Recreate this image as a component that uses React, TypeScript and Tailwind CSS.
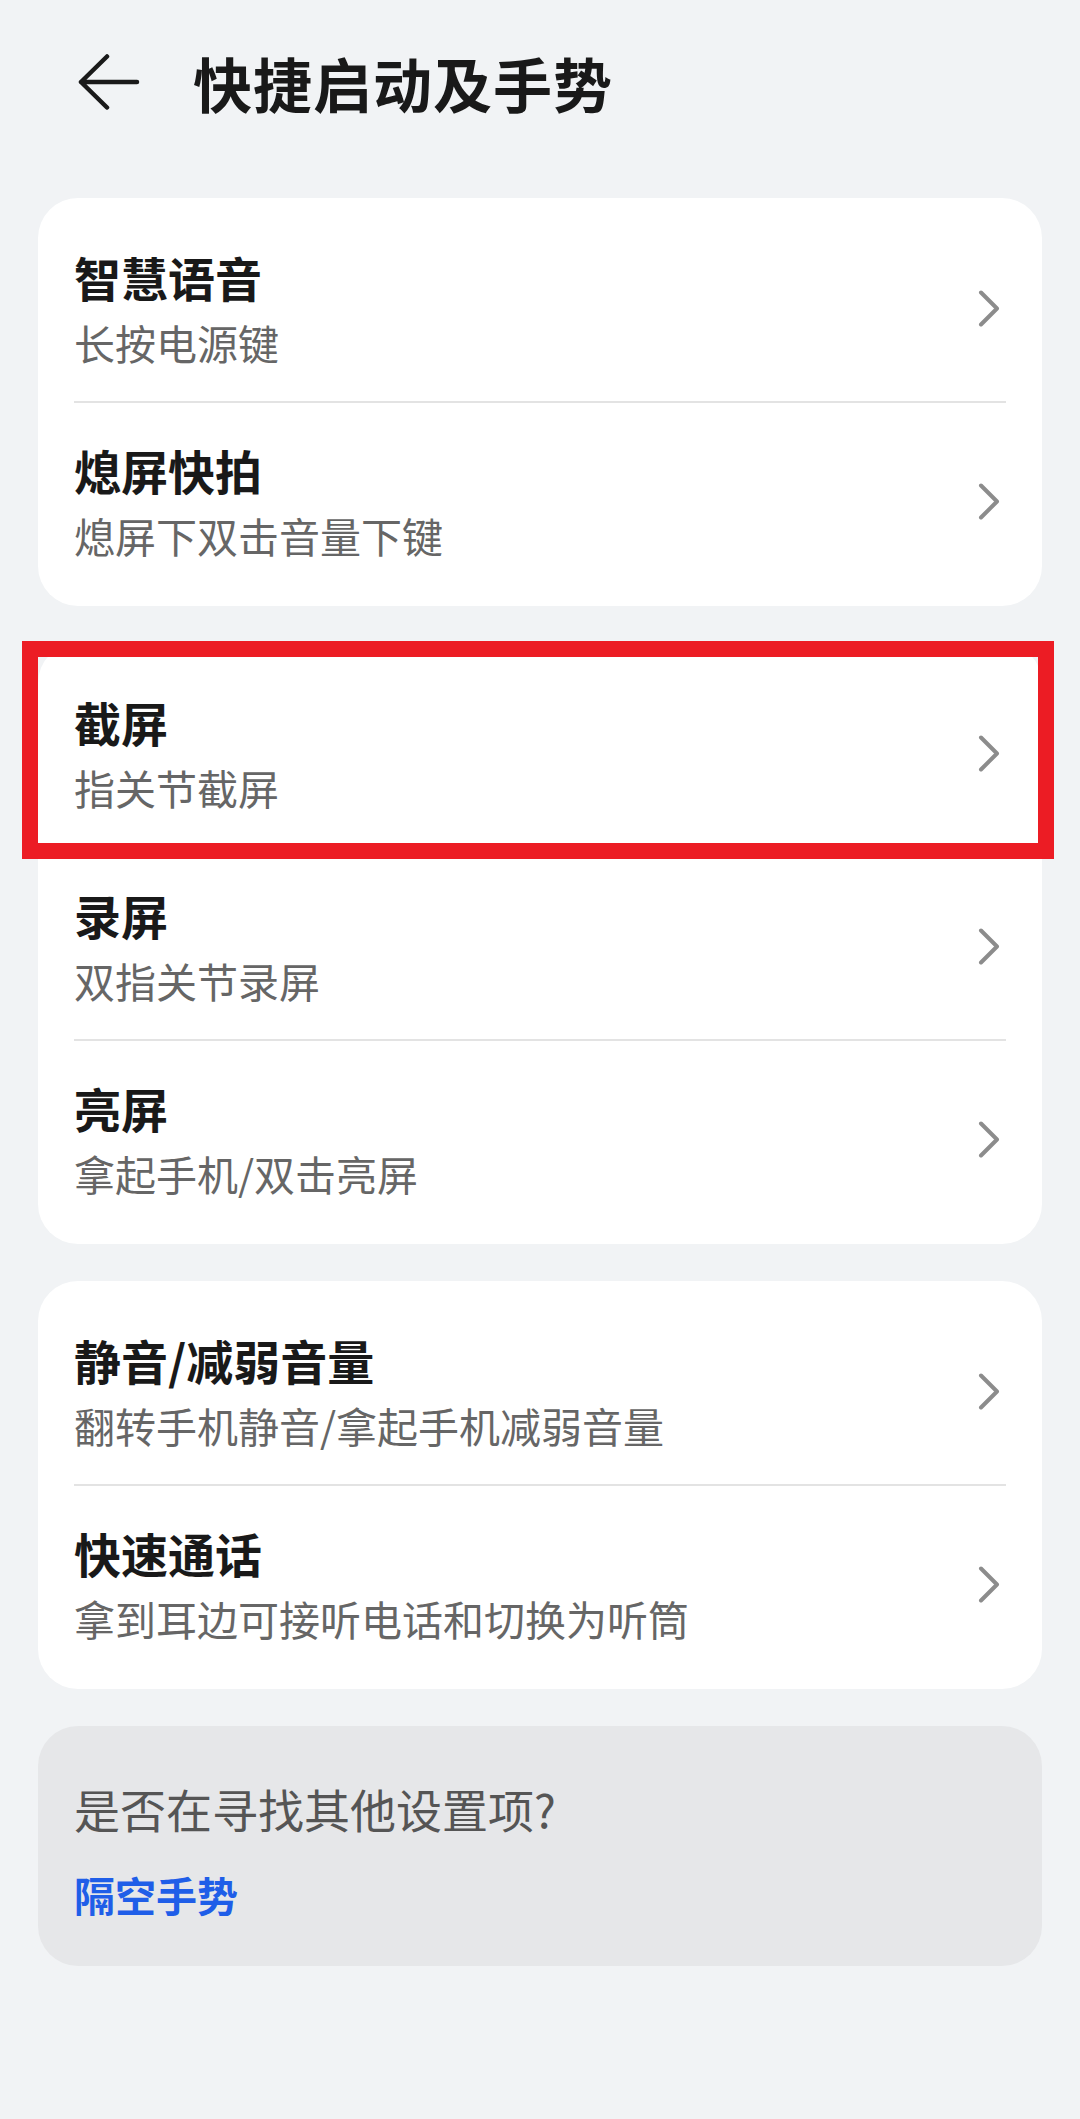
import React from 'react';

type Item = { title: string; desc: string };

const groups: Item[][] = [
  [
    { title: '智慧语音', desc: '长按电源键' },
    { title: '熄屏快拍', desc: '熄屏下双击音量下键' },
  ],
  [
    { title: '截屏', desc: '指关节截屏' },
    { title: '录屏', desc: '双指关节录屏' },
    { title: '亮屏', desc: '拿起手机/双击亮屏' },
  ],
  [
    { title: '静音/减弱音量', desc: '翻转手机静音/拿起手机减弱音量' },
    { title: '快速通话', desc: '拿到耳边可接听电话和切换为听筒' },
  ],
];

const font = { fontFamily: '"Noto Sans CJK SC", "Noto Sans", sans-serif' };

function Chevron() {
  return (
    <svg width="22" height="37" viewBox="0 0 22 37" fill="none" className="mt-[5px] shrink-0">
      <path d="M3 2.5 L19 18.5 L3 34.5" stroke="#8c8c8c" strokeWidth="4" strokeLinecap="round" strokeLinejoin="round" />
    </svg>
  );
}

function Row({ item, last }: { item: Item; last: boolean }) {
  return (
    <div>
      <div className="flex h-[191px] items-center justify-between pl-[36px] pr-[42px]">
        <div className="flex flex-col pt-[4px]">
          <span className="text-[47px] font-bold leading-[56px] text-[#191919]">{item.title}</span>
          <span className="mt-[12px] text-[41px] leading-[50px] text-[#666666]">{item.desc}</span>
        </div>
        <Chevron />
      </div>
      {!last && <div className="mx-[36px] h-[2px] bg-[#e3e3e3]" />}
    </div>
  );
}

export default function App() {
  return (
    <div className="min-h-[2119px] w-[1080px] bg-[#f1f3f5]" style={font}>
      {/* Header */}
      <div className="flex h-[164px] items-center pl-[78px]">
        <svg width="62" height="56" viewBox="0 0 62 56" fill="none">
          <path d="M3 28 H59 M3 28 L29 2.5 M3 28 L29 53.5" stroke="#1a1a1a" strokeWidth="4.5" strokeLinecap="round" strokeLinejoin="round" />
        </svg>
        <h1 className="ml-[53px] text-[59px] font-bold leading-none tracking-[1px] text-[#191919]">快捷启动及手势</h1>
      </div>

      <div className="flex flex-col gap-[37px] px-[38px] pt-[34px]">
        {groups.map((g, gi) => (
          <div key={gi} className="relative rounded-[40px] bg-white py-[12px]">
            {g.map((item, i) => (
              <Row key={item.title} item={item} last={i === g.length - 1} />
            ))}
            {gi === 1 && (
              <div className="pointer-events-none absolute left-[-16px] top-[-2px] h-[218px] w-[1032px] border-[16px] border-[#ec1c24]" />
            )}
          </div>
        ))}

        <div className="rounded-[40px] bg-[#e6e7e9] px-[36px] pb-[47px] pt-[54px]">
          <div className="text-[46px] leading-[56px] text-[#555555]">是否在寻找其他设置项?</div>
          <div className="mt-[33px] text-[41px] font-bold leading-[50px] text-[#1f5ee8]">隔空手势</div>
        </div>
      </div>
    </div>
  );
}
